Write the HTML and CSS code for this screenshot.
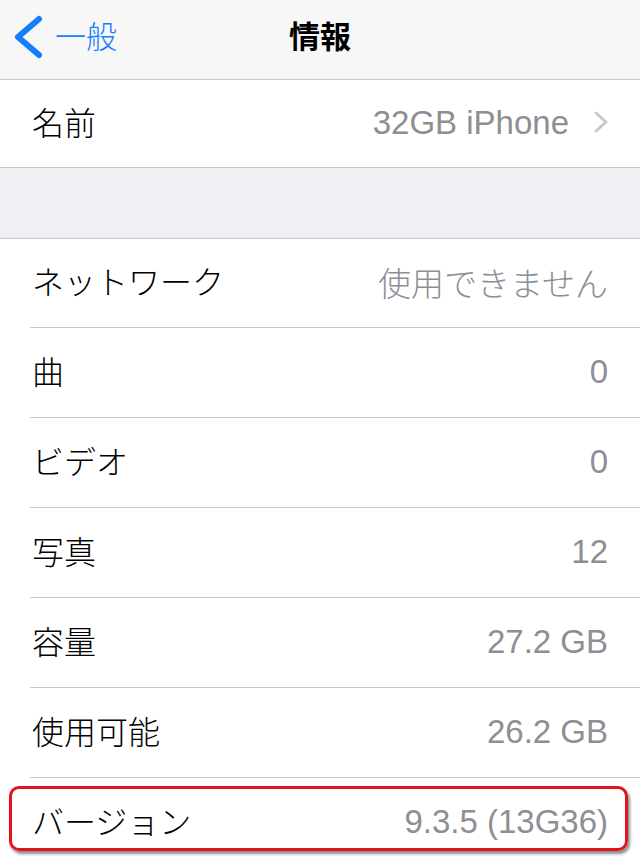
FILE: index.html
```html
<!DOCTYPE html>
<html lang="ja">
<head>
    <meta charset="UTF-8">
    <meta name="viewport" content="width=device-width, initial-scale=1.0">
    <title>情報</title>
    <link rel="stylesheet" href="styles.css">
</head>
<body>
    <header class="nav">
        <a class="back" href="#">
            <svg class="back-icon" width="30" height="44" viewBox="0 0 30 44">
                <polyline points="25,4 4,22 25,40" fill="none" stroke="#157efb" stroke-width="6" stroke-linecap="round" stroke-linejoin="round"/>
            </svg>
            <span>一般</span>
        </a>
        <h1>情報</h1>
        <span></span>
    </header>

    <ul class="group first">
        <li class="row">
            <div class="cell">
                <span class="label">名前</span>
                <span class="value">32GB iPhone</span>
                <svg class="chevron" width="16" height="22" viewBox="0 0 16 22">
                    <polyline points="3,2 13,11 3,20" fill="none" stroke="#c7c7cc" stroke-width="3" stroke-linecap="round" stroke-linejoin="round"/>
                </svg>
            </div>
        </li>
    </ul>

    <ul class="group">
        <li class="row"><div class="cell"><span class="label">ネットワーク</span><span class="value">使用できません</span></div></li>
        <li class="row"><div class="cell"><span class="label">曲</span><span class="value">0</span></div></li>
        <li class="row"><div class="cell"><span class="label">ビデオ</span><span class="value">0</span></div></li>
        <li class="row"><div class="cell"><span class="label">写真</span><span class="value">12</span></div></li>
        <li class="row"><div class="cell"><span class="label">容量</span><span class="value">27.2 GB</span></div></li>
        <li class="row"><div class="cell"><span class="label">使用可能</span><span class="value">26.2 GB</span></div></li>
        <li class="row marked">
            <div class="cell"><span class="label">バージョン</span><span class="value">9.3.5 (13G36)</span></div>
            <span class="highlight"></span>
        </li>
    </ul>
</body>
</html>
```

FILE: styles.css
```css
body { margin: 0; background-color: #efeff4; font-family: "Liberation Sans", "Noto Sans CJK JP", sans-serif; font-size: 32px; font-weight: 300; color: #000; overflow: hidden; }

.nav { height: 80px; box-sizing: border-box; padding-bottom: 10px; background-color: #f7f7f8; border-bottom: 1px solid #c8c7cc; display: grid; grid-template-columns: 1fr auto 1fr; align-items: center; }
.back { display: flex; align-items: center; gap: 11px; padding-left: 14px; color: #157efb; text-decoration: none; font-size: 31px; }
.back-icon { display: block; margin-top: 4px; }
.nav h1 { margin: 0; font-size: 31px; font-weight: bold; }

.group { list-style: none; margin: 70px 0 0; padding: 0 0 0 30px; background-color: #fff; border-top: 1px solid #c8c7cc; border-bottom: 1px solid #c8c7cc; }
.group.first { margin-top: 0; border-top: none; }

.row { position: relative; }
.cell { height: 89px; display: flex; align-items: center; padding-right: 32px; border-bottom: 1px solid #c8c7cc; }
.row:first-child .cell { height: 88px; }
.row:last-child .cell { border-bottom: none; }
.group.first .cell { height: 87px; padding-right: 31px; }

.label { flex: 1; padding-left: 2px; margin-top: -6px; }
.value { color: #8e8e93; font-size: 33px; margin-top: -2px; }
.chevron { margin-left: 24px; display: block; margin-top: -4px; }

.highlight { position: absolute; top: 8px; left: -21px; right: 12px; height: 59px; border: 3px solid #e3121b; border-radius: 10px; box-shadow: 2px 3px 3px rgba(0, 0, 0, 0.45); }
```
